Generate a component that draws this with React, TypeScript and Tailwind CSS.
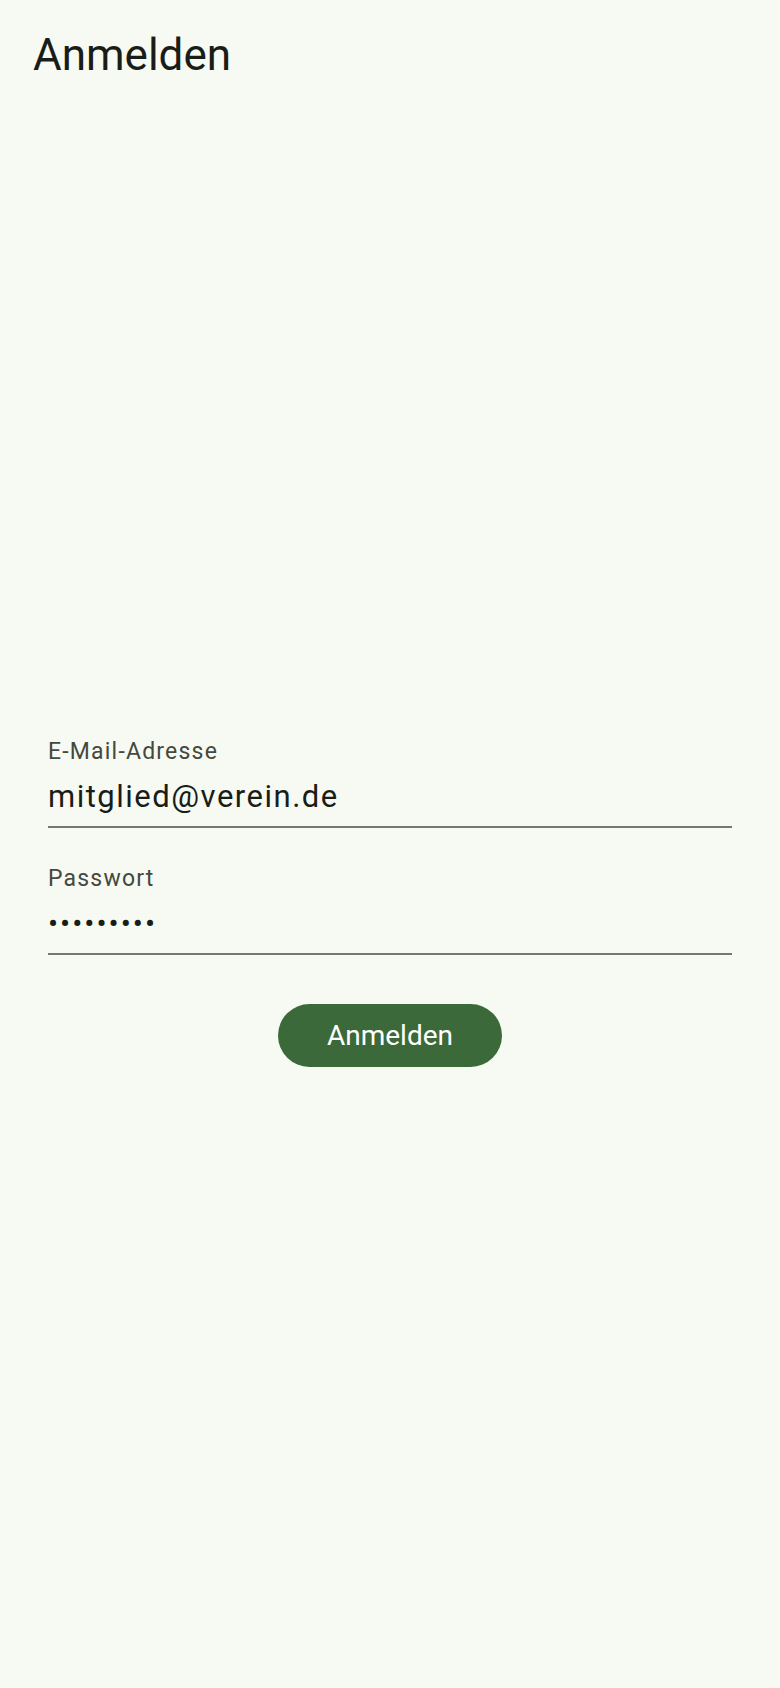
import React from "react";

function Field({ label, value, isPassword }: { label: string; value: string; isPassword?: boolean }) {
  return (
    <div className="flex flex-col border-b-2 border-[#74796d] pb-[9px]">
      <span className="text-[23px] leading-[30px] tracking-[1.2px] text-[#44483f]">{label}</span>
      <span
        className={
          isPassword
            ? "mt-[10px] text-[30px] leading-[40px] tracking-[2px] text-[#191d17]"
            : "mt-[10px] text-[31px] leading-[40px] tracking-[1.5px] text-[#191d17]"
        }
      >
        {value}
      </span>
    </div>
  );
}

export default function App() {
  return (
    <div
      className="flex h-[1688px] w-full flex-col bg-[#f7faf2]"
      style={{ fontFamily: "Roboto, 'Noto Sans', sans-serif" }}
    >
      <header className="h-[116px] shrink-0 px-[33px] pt-[27px]">
        <h1 className="text-[44px] font-normal leading-[56px] text-[#191d17]">Anmelden</h1>
      </header>
      <main className="flex flex-1 flex-col justify-center px-[48px]">
        <Field label="E-Mail-Adresse" value="mitglied@verein.de" />
        <div className="mt-[36px]">
          <Field label="Passwort" value="•••••••••" isPassword />
        </div>
        <div className="mt-[49px] flex justify-center">
          <button className="flex h-[63px] w-[224px] items-center justify-center rounded-full bg-[#3b6939] text-[28px] font-normal text-white">
            Anmelden
          </button>
        </div>
      </main>
    </div>
  );
}
